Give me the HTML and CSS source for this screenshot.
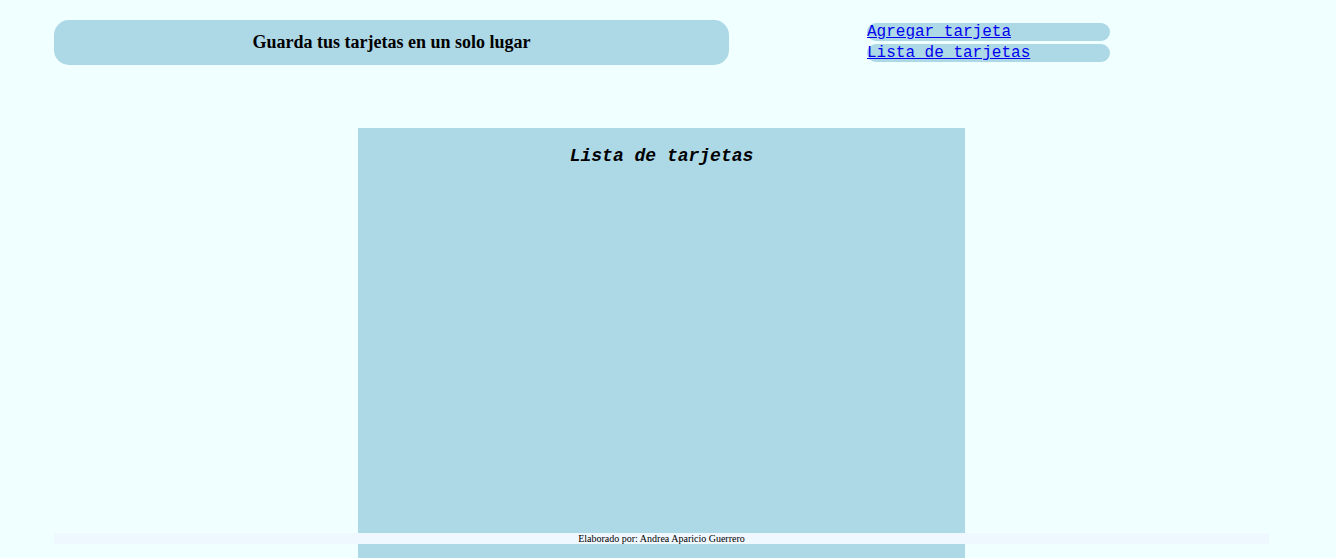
FILE: index.html
```html
<!DOCTYPE html>
<html lang="es">
<head>
<meta charset="utf-8">
<title>Tarjetas</title>
<link rel="stylesheet" href="styles.css">
</head>
<body>
<div class="page">
  <div class="top">
    <header class="banner"><h1 class="banner-title">Guarda tus tarjetas en un solo lugar</h1></header>
    <nav class="nav">
      <a class="nav-link" href="#">Agregar tarjeta</a>
      <a class="nav-link" href="#">Lista de tarjetas</a>
    </nav>
  </div>
  <main class="panel">
    <h2 class="panel-title">Lista de tarjetas</h2>
  </main>
</div>
<footer class="footer">Elaborado por: Andrea Aparicio Guerrero</footer>
</body>
</html>
```
FILE: styles.css
```css
html, body {
  margin: 0;
  padding: 0;
  background: #f0ffff;
  font-family: "Liberation Serif", "Times New Roman", serif;
  overflow: hidden;
  height: 558px;
}
.page {
  padding: 20px 0 0 54px;
}
.top {
  display: flex;
  align-items: flex-start;
}
.banner {
  width: 675px;
  height: 45px;
  background: #add8e6;
  border-radius: 15px;
  display: flex;
  align-items: center;
  justify-content: center;
}
.banner-title {
  margin: 0;
  font-size: 18px;
  font-weight: bold;
}
.nav {
  margin-left: 138px;
  margin-top: 3px;
  width: 243px;
  display: flex;
  flex-direction: column;
  gap: 3px;
}
.nav-link {
  display: block;
  height: 18px;
  line-height: 18px;
  background: #add8e6;
  border-radius: 9px;
  color: #0000ee;
  font-family: "Liberation Mono", "Courier New", monospace;
  font-size: 16px;
  text-decoration: underline;
}
.panel {
  margin: 63px 0 0 304px;
  width: 607px;
  height: 413px;
  background: #add8e6;
  padding-top: 17px;
}
.panel-title {
  margin: 0;
  text-align: center;
  font-family: "Liberation Mono", "Courier New", monospace;
  font-style: italic;
  font-weight: bold;
  font-size: 18px;
  line-height: 22px;
}
.footer {
  position: fixed;
  left: 54px;
  bottom: 14px;
  width: 1215px;
  height: 11px;
  background: #f0f8ff;
  font-size: 10px;
  line-height: 11px;
  text-align: center;
  color: #000;
}
```
